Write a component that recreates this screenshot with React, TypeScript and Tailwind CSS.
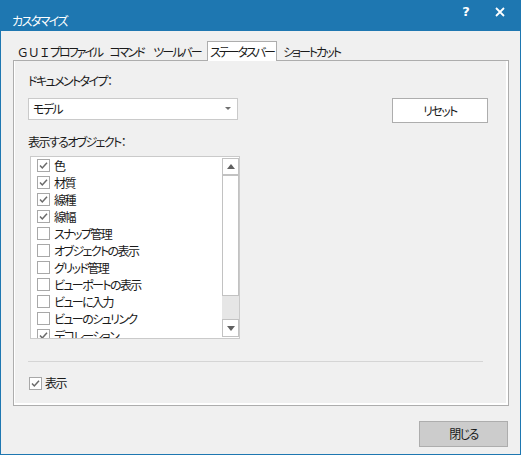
import React from "react";

const font = "[font-family:'Noto_Sans_CJK_JP','Noto_Sans',sans-serif] [font-feature-settings:'palt'] tracking-[-1.6px]";

function Check({ checked }: { checked: boolean }) {
  return (
    <div className="w-[13px] h-[13px] border border-[#a8a8a8] bg-white flex-none flex items-center justify-center">
      {checked && (
        <svg width="11" height="11" viewBox="0 0 11 11">
          <polyline points="2,5.5 4.3,8 9,2.8" fill="none" stroke="#6a6a6a" strokeWidth="1.5" />
        </svg>
      )}
    </div>
  );
}

const items: [string, boolean][] = [
  ["色", true],
  ["材質", true],
  ["線種", true],
  ["線幅", true],
  ["スナップ管理", false],
  ["オブジェクトの表示", false],
  ["グリッド管理", false],
  ["ビューポートの表示", false],
  ["ビューに入力", false],
  ["ビューのシュリンク", false],
  ["デコレーション", true],
];

export default function App() {
  return (
    <div className={`w-[521px] h-[455px] bg-[#f0f0f0] border-x border-b border-[#1e77b1] flex flex-col text-[12px] leading-[16px] text-[#1a1a1a] ${font}`}>
      {/* Title bar */}
      <div className="h-[31px] bg-[#1e77b1] flex flex-none text-white">
        <div className="pl-[11px] pt-[13px] flex-1">カスタマイズ</div>
        <div className="flex pr-[3px]">
          <div className="w-[34px] h-[24px] flex items-center justify-center font-bold text-[13px] tracking-normal [font-family:'DejaVu_Sans',sans-serif]">?</div>
          <div className="w-[34px] h-[24px] flex items-center justify-center">
            <svg width="10" height="10" viewBox="0 0 10 10">
              <path d="M1 1 L9 9 M9 1 L1 9" stroke="#fff" strokeWidth="1.8" />
            </svg>
          </div>
        </div>
      </div>

      <div className="flex-1 flex flex-col px-[12px] pt-[10px]">
        {/* Tabs */}
        <div className="flex h-[19px] relative z-10 whitespace-nowrap tracking-[-2px]">
          <div className="w-[93px] h-[19px] pt-[3px] flex items-center justify-center">
            <span className="[font-feature-settings:normal] tracking-[-1px]">ＧＵＩ</span>プロファイル
          </div>
          <div className="w-[41px] h-[19px] pt-[3px] flex items-center justify-center">コマンド</div>
          <div className="w-[60px] h-[19px] pt-[3px] flex items-center justify-center">ツールバー</div>
          <div className="w-[70px] h-[20px] bg-white border-x border-t border-[#adadad] flex items-center justify-center">
            ステータスバー
          </div>
          <div className="w-[69px] h-[19px] pt-[3px] flex items-center justify-center">ショートカット</div>
        </div>

        {/* Panel */}
        <div className="w-[496px] h-[346px] border border-[#adadad] shadow-[inset_1px_0_0_#fff,inset_-2px_-2px_0_#fff] flex flex-col pl-[14px] pr-[20px]">
          <div className="pt-[12px]">ドキュメントタイプ：</div>
          <div className="flex items-start mt-[9px]">
            <div className="w-[210px] h-[22px] bg-white border border-[#cacaca] flex items-center pl-[4px] pr-[6px]">
              <span className="flex-1">モデル</span>
              <svg width="6" height="4" viewBox="0 0 6 4">
                <path d="M0 0 L6 0 L3 3 Z" fill="#707070" />
              </svg>
            </div>
            <div className="ml-auto w-[96px] h-[25px] bg-white border border-[#adadad] flex items-center justify-center">
              リセット
            </div>
          </div>
          <div className="mt-[11px]">表示するオブジェクト：</div>
          <div className="ml-[2px] mt-[6px] w-[210px] h-[183px] bg-white border border-[#cacaca] flex overflow-hidden">
            <div className="flex-1 flex flex-col pl-[6px] overflow-hidden whitespace-nowrap">
              {items.map(([t, c]) => (
                <div key={t} className="h-[17px] flex-none flex items-center gap-[4px]">
                  <Check checked={c} />
                  <span>{t}</span>
                </div>
              ))}
            </div>
            <div className="w-[17px] flex-none flex flex-col py-[1px]">
              <div className="h-[17px] border border-[#c2c2c2] bg-white flex items-center justify-center">
                <svg width="8" height="5" viewBox="0 0 8 5">
                  <path d="M0 5 L8 5 L4 0 Z" fill="#606060" />
                </svg>
              </div>
              <div className="h-[121px] border border-[#c2c2c2] bg-white"></div>
              <div className="flex-1 bg-[#e6e6e6]"></div>
              <div className="h-[18px] border border-[#c2c2c2] bg-white flex items-center justify-center">
                <svg width="8" height="5" viewBox="0 0 8 5">
                  <path d="M0 0 L8 0 L4 5 Z" fill="#606060" />
                </svg>
              </div>
            </div>
          </div>
          <div className="mt-[22px] h-px bg-[#d5d5d5] w-[455px]"></div>
          <div className="mt-[13px] flex items-center gap-[3px] ml-[1px]">
            <Check checked={true} />
            <span>表示</span>
          </div>
        </div>

        {/* Footer */}
        <div className="flex justify-end mt-[15px]">
          <div className="w-[89px] h-[26px] bg-[#cccccc] border border-[#adadad] flex items-center justify-center">
            閉じる
          </div>
        </div>
      </div>
    </div>
  );
}
